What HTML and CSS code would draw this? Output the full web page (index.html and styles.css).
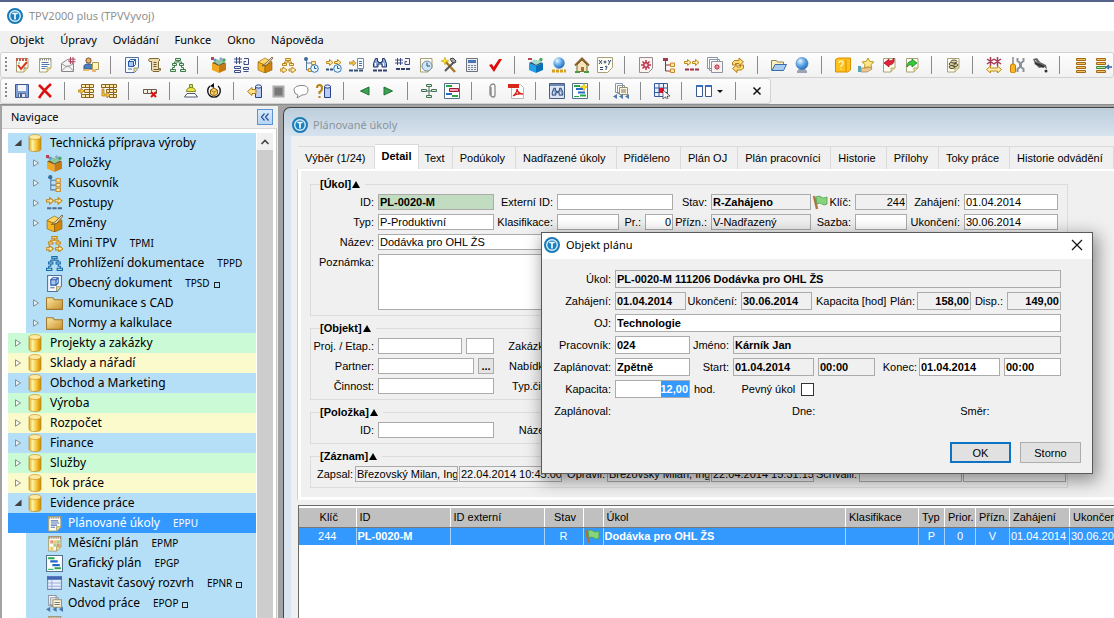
FILE: index.html
```html
<!DOCTYPE html>
<html lang="cs">
<head>
<meta charset="utf-8">
<title>TPV2000 plus (TPVVyvoj)</title>
<link rel="stylesheet" href="styles.css">
</head>
<body>
<svg class="sprite" aria-hidden="true">
  <defs>
    <linearGradient id="gold" x1="0" x2="1" y1="0" y2="0"><stop offset="0" stop-color="#e0a828"/><stop offset=".3" stop-color="#fff3a0"/><stop offset=".7" stop-color="#f0b820"/><stop offset="1" stop-color="#c88808"/></linearGradient>
    <linearGradient id="fold" x1="0" x2="1" y1="0" y2="1"><stop offset="0" stop-color="#ffe9a0"/><stop offset="1" stop-color="#c8902c"/></linearGradient>
    <radialGradient id="ball" cx=".35" cy=".3" r=".8"><stop offset="0" stop-color="#e8f6ff"/><stop offset=".5" stop-color="#5aa5e8"/><stop offset="1" stop-color="#2060b0"/></radialGradient>
  </defs>
  <symbol id="logo" viewBox="0 0 16 16"><circle cx="8" cy="8" r="7" fill="#d5eefb" stroke="#1a7ab5" stroke-width="2"/><circle cx="8" cy="8" r="4.6" fill="#1a80be"/><path d="M5.3 5.5h5.4M8 5.5v6" stroke="#fff" stroke-width="1.6"/></symbol>
  <symbol id="page" viewBox="0 0 16 16"><path d="M2.5 1.5h11.500v9.500l-4 4H2.500z" fill="#fffef2" stroke="#a8a078"/><path d="M10 15v-4h4" fill="#efe2a0" stroke="#b8a860"/></symbol>
  <symbol id="note" viewBox="0 0 16 16"><use href="#page"/><path d="M3 2.500h11" stroke="#8d8d8d" stroke-width="2" stroke-dasharray="1 1"/><path d="M4.500 5.500h7M4.500 7.500h8M4.500 9.500h6M4.500 11.500h4" stroke="#4f76b5"/></symbol>
  <symbol id="calcheck" viewBox="0 0 16 16"><use href="#page"/><path d="M2 2.500h12" stroke="#c75a4a" stroke-width="3" stroke-dasharray="2 1"/><path d="M4 8l3 4 6-7" fill="none" stroke="#d43a20" stroke-width="2"/><path d="M4 6h2M10 11h2" stroke="#6d8ec0"/></symbol>
  <symbol id="mail" viewBox="0 0 16 16"><path d="M1.500 6.500l6-4 6 4v8h-12z" fill="#f4f4f4" stroke="#888"/><path d="M1.500 14l5-5h2l5 5M2 7l5 3 6-3" fill="none" stroke="#999"/><path d="M10.500 0v7M13 0v7M8.500 2.200h7M8.500 4.700h7" stroke="#b0405a"/></symbol>
  <symbol id="person" viewBox="0 0 16 16"><circle cx="5.500" cy="3.500" r="2.600" fill="#e8b070" stroke="#7a4a20"/><path d="M1 12V8.500L3.500 7h4L10 8.500V12z" fill="#4d7ec0" stroke="#2e5590"/><path d="M9.500 5.500h6v7h-6z" fill="#fff6c0" stroke="#b09a50"/><path d="M0 12h6v2H0zM9 12h4v3H9z" fill="#e8b870"/></symbol>
  <symbol id="doc" viewBox="0 0 16 16"><path d="M1.500.5h13v10l-4 5h-9z" fill="#f4f8ff" stroke="#53709c"/><path d="M4.500 4.500h5v5h-5z" fill="#a9c6f0" stroke="#2457a5"/><path d="M4.500 4.500l2-2h5v5l-2 2M9.500 4.500l2-2" fill="none" stroke="#2457a5"/><path d="M4 12h4" stroke="#4b70a8"/><path d="M10 15v-4h4" fill="#f4e6a0" stroke="#a89858"/></symbol>
  <symbol id="scroll" viewBox="0 0 16 16"><path d="M2.500 1.500h9l1.500 1.500-1.500 1.500v7h2v1.500l-1.500 1.500H6l-1.500-1.500v-8.500h-2L1.500 3z" fill="#ecdcae" stroke="#7e6636"/><path d="M6.500 5.500h3M6.500 7.500h3M6.500 9.500h3M6.500 12.500h6" stroke="#6e5a34"/></symbol>
  <symbol id="treeshape" viewBox="0 0 16 16"><path d="M5.500 1.500h5v2h-5zM2.500 6.500h4v2h-4zM9.500 6.500h4v2h-4zM.5 12.500h5v2h-5zM10.500 12.500h5v2h-5z"/><path d="M8 3.500v1.500M4.500 6.500v-1.500h7v1.500M4.500 8.500v2h-2v2M11.500 8.500v2h2v2" fill="none"/></symbol>
  <symbol id="treegreen" viewBox="0 0 16 16"><use href="#treeshape" fill="#dff3d8" stroke="#3d7a4a"/></symbol>
  <symbol id="treegold" viewBox="0 0 16 16"><path d="M5.500 1.500h5v2h-5zM2.500 6.500h4v2h-4zM9.500 6.500h4v2h-4zM8 3.500v1.500M4.500 6.500v-1.500h7v1.500M0 12h3v-2l4 3-4 3v-2H0zM9 12h3v-2l4 3-4 3v-2H9z" fill="#fff0b0" stroke="#c08414"/></symbol>
  <symbol id="treeblue" viewBox="0 0 16 16"><use href="#treeshape" fill="#a0e0d8" stroke="#1766a8"/></symbol>
  <symbol id="box" viewBox="0 0 16 16"><path d="M1 6l7 3v7l-7-3z" fill="#f0a820"/><path d="M8 9l7-3v7l-7 3z" fill="#c87a10"/><path d="M1 6l6-3 8 3-7 3z" fill="#7a5210"/><path d="M3 5l3-3 3 2 3-2 2 3-6 3z" fill="#8cc8a0"/><circle cx="4" cy="3" r="1.500" fill="#5b9bd8"/><circle cx="13" cy="3" r="1.700" fill="#4da66a"/><path d="M0 0h3v3H0z" fill="#b84455"/><path d="M8 2l2-2 2 2-2 2z" fill="#88a8c8"/></symbol>
  <symbol id="bluebox" viewBox="0 0 16 16"><path d="M1 6l7 3v7l-7-3z" fill="#20a0e8"/><path d="M8 9l7-3v7l-7 3z" fill="#0870b8"/><path d="M1 6l6-3 8 3-7 3z" fill="#124e80"/><path d="M3 5l3-3 3 2 3-2 2 3-6 3z" fill="#a8dcc8"/><circle cx="13" cy="2.500" r="1.700" fill="#4da66a"/><path d="M0 1h4v2H0z" fill="#b84455"/></symbol>
  <symbol id="goldbox" viewBox="0 0 16 16"><path d="M1 5l7 3v8l-7-3z" fill="#f6b624" stroke="#8a5800" stroke-width=".6"/><path d="M8 8l7-3v8l-7 3z" fill="#cf850c" stroke="#8a5800" stroke-width=".6"/><path d="M1 5l7-4 7 4-7 3z" fill="#ffd968" stroke="#8a5800" stroke-width=".6"/><path d="M5 9l4-3 6-6 1 1-6 7z" fill="#e9d2a0" stroke="#5c4320" stroke-width=".7"/></symbol>
  <symbol id="hash" viewBox="0 0 16 16"><path d="M2.500 0v7M5.500 0v7M0 2h8M0 5h8M10 1.500h4.500v6H10M12 4.500h-2v3M.5 9.500h6v2h-6zM.5 13.500h6v2h-6zM9.500 10.500h5v2h-5zM9.500 14.500h5" fill="none" stroke="#3d4d86"/></symbol>
  <symbol id="hashdots" viewBox="0 0 16 16"><path d="M2.500 1v7M5.500 1v7M0 3h8M0 6h8M10 1.500h4.500v6H10M12 4.500h-2v3" fill="none" stroke="#3d4d86"/><path d="M1 12h14" stroke="#33406a" stroke-width="2" stroke-dasharray="4 1"/></symbol>
  <symbol id="clock" viewBox="0 0 16 16"><circle cx="11.500" cy="11.500" r="3.800" fill="#e7f6ff" stroke="#2d77b8"/><path d="M11.500 9v2.500h2" fill="none" stroke="#225a90"/></symbol>
  <symbol id="structure" viewBox="0 0 16 16"><path d="M4.500 3v11h5M4.500 5h5M4.500 9.500h5" fill="none" stroke="#56789c"/><circle cx="4" cy="2" r="2" fill="#3a6c9c"/><path d="M9.500 3.500h4v3h-4zM9.500 8h4v3h-4zM9.500 12.500h4v3h-4z" fill="#ffe9a8" stroke="#c8892a"/></symbol>
  <symbol id="treered" viewBox="0 0 16 16"><path d="M4.500 3v11h5M4.500 8h5" fill="none" stroke="#8a3348"/><path d="M2 1h5v3H2z" fill="#a03a50"/><path d="M9.500 6h4v3.500h-4zM9.500 12h4v3.500h-4z" fill="#ffe9a8" stroke="#c8892a"/></symbol>
  <symbol id="treeclock" viewBox="0 0 16 16"><path d="M3.500 3v10h4M4 6h5" fill="none" stroke="#56789c"/><circle cx="3" cy="2" r="2" fill="#3a6c9c"/><path d="M8.500 4.500h4v3h-4zM5.500 11.500h3v3h-3z" fill="#ffe9a8" stroke="#c8892a"/><use href="#clock"/></symbol>
  <symbol id="arr" viewBox="0 0 16 16"><path d="M.5 4.500h3v-2l3.500 3-3.500 3v-2h-3zM8.500 4.500h3v-2l3.500 3-3.500 3v-2h-3z" fill="#ffeeb0" stroke="#c08414"/></symbol>
  <symbol id="arrowsblue" viewBox="0 0 16 16"><use href="#arr"/><path d="M1 12.500h14" stroke="#4e6e96" stroke-width="2" stroke-dasharray="4 1"/></symbol>
  <symbol id="arrowsred" viewBox="0 0 16 16"><use href="#arr"/><path d="M1 12.500h14" stroke="#9c2f44" stroke-width="2" stroke-dasharray="4 1"/></symbol>
  <symbol id="arrowsclock" viewBox="0 0 16 16"><use href="#arr"/><path d="M0 12.500h8" stroke="#33507a" stroke-width="2" stroke-dasharray="3 1"/><use href="#clock"/></symbol>
  <symbol id="arrowdoc" viewBox="0 0 16 16"><path d="M0 5h4V3l3 3-3 3V7H0z" fill="#f3c040" stroke="#b07c10" stroke-width=".6"/><path d="M8.500 1.500h6v10h-6z" fill="#f8fbff" stroke="#7288a8"/><path d="M10 4.500h3M10 6.500h3M10 8.500h3" stroke="#4a72b0"/><path d="M0 13.500h15" stroke="#33507a" stroke-width="2" stroke-dasharray="4 1"/></symbol>
  <symbol id="binoc" viewBox="0 0 16 16"><path d="M3.500 1.500h2v3h1v1h3v-1h1v-3h2l2 5v3.500h-4.500V7h-4v3H1.500V6.500z" fill="#8fa8d8" stroke="#1f3568"/><path d="M3.500 6v3M11.500 6v3" stroke="#fff"/></symbol>
  <symbol id="binocdots" viewBox="0 0 16 16"><use href="#binoc"/><path d="M1 13.500h14" stroke="#33406a" stroke-width="2" stroke-dasharray="4 1"/></symbol>
  <symbol id="clockpage" viewBox="0 0 16 16"><use href="#page"/><circle cx="9" cy="9" r="5" fill="#cfe6f6" stroke="#6f8ea8"/><path d="M9 5.500V9h3" fill="none" stroke="#30506e"/></symbol>
  <symbol id="hammer" viewBox="0 0 16 16"><path d="M4 4l10 11" stroke="#a87824" stroke-width="2.400"/><path d="M14 4L4 14" stroke="#555" stroke-width="2"/><path d="M9 2l3-1 3 3-1 2-3-1z" fill="#aaa" stroke="#444"/><path d="M4 0l1 3 3 1-3 1-1 3-1-3-3-1 3-1z" fill="#ffe11a" stroke="#b89800" stroke-width=".5"/></symbol>
  <symbol id="calc" viewBox="0 0 16 16"><path d="M2.500 1.500h11v13h-11z" fill="#e9edf2" stroke="#6d7480"/><path d="M4 3h8v3H4z" fill="#4d72b8"/><path d="M4 8.500h8M4 10.500h8M4 12.500h8" stroke="#7c8694" stroke-dasharray="2 1"/></symbol>
  <symbol id="check" viewBox="0 0 16 16"><path d="M2 8l3-1 1.500 3L12 2h3L7 15z" fill="#e00c0c"/></symbol>
  <symbol id="globe" viewBox="0 0 16 16"><circle cx="8" cy="6" r="5.700" fill="url(#ball)"/><path d="M1 14h14" stroke="#d6a020" stroke-width="3" stroke-dasharray="3 1"/></symbol>
  <symbol id="globestand" viewBox="0 0 16 16"><path d="M3 14l3-3h4l3 3v2H3z" fill="#9aa4b4"/><circle cx="8" cy="6.500" r="6" fill="url(#ball)" stroke="#3a78b8" stroke-width=".6"/></symbol>
  <symbol id="house" viewBox="0 0 16 16"><path d="M3 8l5-5 5 5v6.500H3z" fill="#f6e4b8" stroke="#7a6238"/><path d="M1 8.500l7-7 7 7" fill="none" stroke="#8a6430" stroke-width="2"/><path d="M7 10h3v5H7z" fill="#a0703a"/><path d="M1 15h5M10 15h5" stroke="#4a9a40" stroke-width="2"/></symbol>
  <symbol id="xy" viewBox="0 0 16 16"><path d="M.5.5h15v10l-5 5H.500z" fill="#fffef2" stroke="#a8a078"/><path d="M2 3l3 4M5 3L2 7M6.500 5h3M8 3.500v3M11 3l1.500 2L14 3M12.500 5l-1 3M3 10.500h3M3 12.500h3M8 10q2-2 2 0l-1 2v1" fill="none" stroke="#2c4570"/></symbol>
  <symbol id="gear" viewBox="0 0 16 16"><path d="M8 3v10M3 8h10M4.500 4.500l7 7M11.500 4.500l-7 7" stroke="#c03a55" stroke-width="1.600"/><circle cx="8" cy="8" r="2.200" fill="#f4d4dc" stroke="#c03a55" stroke-width="1.400"/></symbol>
  <symbol id="gearpage" viewBox="0 0 16 16"><path d="M1.500.5h13v11l-4 4h-9z" fill="#fbf3ee" stroke="#9a8a94"/><use href="#gear"/></symbol>
  <symbol id="gearpages" viewBox="0 0 16 16"><path d="M.5.5h10v11H.5zM2.500 2.500h10v11h-10z" fill="#fff" stroke="#8a94a4"/><path d="M4.500 4.500h11v11h-11z" fill="#fbf3ee" stroke="#8a94a4"/><use href="#gear" x="5" y="5" width="10" height="10"/></symbol>
  <symbol id="refresh" viewBox="0 0 16 16"><path d="M2.500 8V5.500l2-2H9V1l4.500 4L9 9V6.500H5.500V8z" fill="#fbdc78" stroke="#b87c10"/><path d="M13.500 8v3l-2 2H7v2.500L2.500 11.500 7 7.500V10h3.500V8z" fill="#fbdc78" stroke="#b87c10"/></symbol>
  <symbol id="openfolder" viewBox="0 0 16 16"><path d="M.5 13.500v-10h5l1 1.500h6v3" fill="#fff0b8" stroke="#8a8060"/><path d="M1 13.500L4 7.500h11.500l-3 6z" fill="#a9cbf0" stroke="#3a6ca8"/></symbol>
  <symbol id="goldq" viewBox="0 0 16 16"><path d="M.5 2.500l3-1.500h12v12l-3 2H.500z" fill="#ffc21c" stroke="#d88c00"/><path d="M11 3v12" stroke="#d88c00"/><path d="M4 6q0-2 2-2t2 2-2 3v1M6 11.500v1" fill="none" stroke="#fff3b0" stroke-width="1.400"/></symbol>
  <symbol id="starhand" viewBox="0 0 16 16"><path d="M10 1l1.700 3.300L16 5l-3 2.500.7 4-3.700-2-3.700 2 .7-4L4 5l4.300-.7z" fill="#fbe88a" stroke="#c09a20"/><path d="M3 11h6l4-1 1 2-5 3H3z" fill="#f0c890" stroke="#a87c4c" stroke-width=".7"/><path d="M0 9h3v6H0z" fill="#56a4b8"/></symbol>
  <symbol id="redarrow" viewBox="0 0 16 16"><use href="#page"/><path d="M3 6l5-4v2q4 0 5-3 1 7-5 7v2z" fill="#e8203c" stroke="#900c20" stroke-width=".7"/></symbol>
  <symbol id="greenarrow" viewBox="0 0 16 16"><use href="#page"/><path d="M13 6L8 2v2Q3 4 3 10q2-3 5-2v2z" fill="#38c838" stroke="#0c7818" stroke-width=".7"/></symbol>
  <symbol id="coins" viewBox="0 0 16 16"><use href="#page"/><g fill="#e5d9a0" stroke="#4e4a36"><ellipse cx="7" cy="10" rx="3" ry="1.500"/><ellipse cx="10" cy="8" rx="3" ry="1.500"/><ellipse cx="7" cy="7" rx="3" ry="1.500"/><ellipse cx="9" cy="4.500" rx="3" ry="1.500"/></g></symbol>
  <symbol id="gearsarrow" viewBox="0 0 16 16"><path d="M4.500 0v9M1 2l7 5M8 2L1 7M11.500 0v9M8 2l7 5M15 2L8 7" stroke="#a83a54" stroke-width="1.500"/><path d="M.5 12.500l4-3.500v2h7V9l4 3.500-4 3.500v-2h-7v2z" fill="#fff0b0" stroke="#c08414"/></symbol>
  <symbol id="tools" viewBox="0 0 16 16"><path d="M4 0v8" stroke="#888" stroke-width="1.500"/><rect x="1.500" y="7" width="5" height="9" rx="2" fill="#ffb420" stroke="#c07c00"/><path d="M8.500 1v3l2.500 2v4l-2.500 2v3M14.500 1v3L12 6v4l2.500 2v3" fill="none" stroke="#8a929c" stroke-width="2"/></symbol>
  <symbol id="oil" viewBox="0 0 16 16"><path d="M1 2l4-1 3 4 6 3 1 4-3-2-5 1-4-4z" fill="#666"/><path d="M3 3l4 5" stroke="#ccc"/><path d="M3 6l9 4" stroke="#333" stroke-width="2"/><circle cx="14" cy="14" r="1.500" fill="#333"/></symbol>
  <symbol id="stack" viewBox="0 0 16 16"><path d="M3.500 1.500h9v2h-9zM3.500 5.500h9v2h-9zM3.500 9.500h9v2h-9zM3.500 13.500h9v2h-9z" fill="#f8c060" stroke="#a06a18"/></symbol>
  <symbol id="stackarrow" viewBox="0 0 16 16"><path d="M.5 1.500h9v2h-9zM.5 13.500h9v2h-9zM.5 5.500h9v2h-9z" fill="#f8c060" stroke="#a06a18"/><path d="M.5 9.500h9v2h-9z" fill="#c0e0a0" stroke="#3f8a3a"/><path d="M16 10h-4M13 8l-2.500 2 2.500 2" fill="none" stroke="#2c62a8" stroke-width="1.500"/></symbol>
  <symbol id="save" viewBox="0 0 16 16"><path d="M1.500 1.500h13v13h-13z" fill="#7d9fd6" stroke="#3c5690"/><path d="M4 2h8v6H4z" fill="#f2f5fb"/><path d="M4.500 10.500h7v4h-7z" fill="#dfe6f2" stroke="#5a6c94"/><path d="M6 11h2v3H6z" fill="#3c5690"/></symbol>
  <symbol id="cross" viewBox="0 0 16 16"><path d="M2 2q4 4 12 12M14 1Q8 6 2 15" fill="none" stroke="#dd1010" stroke-width="2.600"/></symbol>
  <symbol id="insrow" viewBox="0 0 16 16"><path d="M3.500 1.500h12v3h-12zM6.500 6.500h9v3h-9zM3.500 11.500h12v3h-12zM7.500 1.500v3M11.500 1.500v13M7.500 11.500v3" fill="#ffe9a8" stroke="#8a6420"/><path d="M0 7h3V5l3 3-3 3V9H0z" fill="#f6c23c" stroke="#a87410" stroke-width=".7"/></symbol>
  <symbol id="insrow2" viewBox="0 0 16 16"><path d="M.5 1.500h15v3H.5zM5.500 6.500h10v3h-10zM8.500 11.500h7v3h-7zM4.500 1.500v3M8.500 1.500v8M12.500 1.500v13" fill="#ffe9a8" stroke="#8a6420"/><path d="M1 6h2v5h3V9l3 3-3 3v-2H1z" fill="#f6c23c" stroke="#a87410" stroke-width=".7"/></symbol>
  <symbol id="delrow" viewBox="0 0 16 16"><path d="M1.500 6.500h13v4h-13zM5.500 6.500v4M9.500 6.500v4" fill="#f4f0e4" stroke="#6a5c48"/><path d="M9 9l5 5M14 9l-5 5" stroke="#dd1010" stroke-width="2"/></symbol>
  <symbol id="bell" viewBox="0 0 16 16"><path d="M6.500 1.500h3v3h-3z" fill="#c8e46a" stroke="#7d8a20"/><path d="M3.500 8.500q0-4 4.500-4t4.500 4z" fill="#f2e24c" stroke="#7d8a20"/><path d="M4 10.500h8l2.500 3.500h-13z" fill="#fff" stroke="#4c5a68"/></symbol>
  <symbol id="cycle" viewBox="0 0 16 16"><path d="M4 3A6.300 6.300 0 1 0 12 3" fill="none" stroke="#111" stroke-width="1.400"/><path d="M8 0l-4 3 4 2z" fill="#111"/><path d="M4.500 7L8 5l3.500 2v4L8 13l-3.500-2z" fill="#f9d36c" stroke="#8a5c08"/><path d="M5 7.500l3 1.500 3-1.500M8 9v4" fill="none" stroke="#b07c20"/></symbol>
  <symbol id="dbin" viewBox="0 0 16 16"><path d="M8.500 3.500h6v11h-6z" fill="#b9cdf2" stroke="#27408a"/><ellipse cx="11.500" cy="3.500" rx="3" ry="1.600" fill="#e4ecfb" stroke="#27408a"/><path d="M9 6.500H5v-2l-4.500 4 4.500 4v-2h4z" fill="#ffe28a" stroke="#b07c10"/></symbol>
  <symbol id="dbq" viewBox="0 0 16 16"><path d="M8.500 3.500h6v11h-6z" fill="#b9cdf2" stroke="#27408a"/><ellipse cx="11.500" cy="3.500" rx="3" ry="1.600" fill="#e4ecfb" stroke="#27408a"/><path d="M1 5q0-3 2.500-3T6 5 3.500 9v2M3.500 13v2" fill="none" stroke="#b8820c" stroke-width="2"/></symbol>
  <symbol id="stop" viewBox="0 0 16 16"><path d="M3.500 3.500h10v10h-10z" fill="#777" stroke="#aaa" stroke-width="2"/></symbol>
  <symbol id="bubble" viewBox="0 0 16 16"><path d="M5 12Q1 11 1 7t7-4.500T15 7t-6 5l-5 3z" fill="#fff" stroke="#888"/></symbol>
  <symbol id="prev" viewBox="0 0 16 16"><path d="M12 4v8L3.500 8z" fill="#3da052" stroke="#1f7434"/></symbol>
  <symbol id="next" viewBox="0 0 16 16"><path d="M4 4v8l8.500-4z" fill="#3da052" stroke="#1f7434"/></symbol>
  <symbol id="flow" viewBox="0 0 16 16"><path d="M8 3v10M3 8h10" stroke="#46705a"/><path d="M5.500 1.500h5v2h-5zM.5 6.500h5v2h-5zM10.500 6.500h5v2h-5zM5.500 12.500h5v2h-5z" fill="#dff3d8" stroke="#46705a"/></symbol>
  <symbol id="gantt" viewBox="0 0 16 16"><path d="M.5.5h15v15H.5z" fill="#fff" stroke="#54708c"/><path d="M2 3h6M8 12.500h6" stroke="#25a845" stroke-width="2"/><path d="M4 6h7M6 9.500h7" stroke="#2468c8" stroke-width="2"/><path d="M2 13.500h5" stroke="#25a845"/></symbol>
  <symbol id="ganttred" viewBox="0 0 16 16"><path d="M.5.5h15v15H.5z" fill="#fff" stroke="#54708c"/><path d="M2 3h6M8 13h6" stroke="#25a845" stroke-width="2"/><path d="M5.500 5.500h9v3h-9z" fill="#f4a0b0" stroke="#a01838"/><path d="M2 11h6" stroke="#2468c8" stroke-width="2"/></symbol>
  <symbol id="ganttstar" viewBox="0 0 16 16"><use href="#gantt"/><path d="M12 0l1 3 3 1-3 1-1 3-1-3-3-1 3-1z" fill="#ffe11a" stroke="#b89800" stroke-width=".5"/></symbol>
  <symbol id="clip" viewBox="0 0 16 16"><path d="M6 4v8q0 2 2 2t2-2V3.500Q10 1 8 1T5 3.500v9" fill="none" stroke="#8a8a8a" stroke-width="1.300"/></symbol>
  <symbol id="pdf" viewBox="0 0 16 16"><path d="M3.500 1.500h9l3 3v11h-12z" fill="#fff" stroke="#b8b8b8"/><path d="M0 1h11v4H0z" fill="#d8281c"/><path d="M5 13q4-3 4-7 1 5 6 5-6-1-10 2z" fill="none" stroke="#d8281c" stroke-width="1.300"/></symbol>
  <symbol id="find" viewBox="0 0 16 16"><path d="M.5.5h15v15H.5z" fill="#dbe6f6" stroke="#4a5c7c"/><path d="M1 2h14" stroke="#6d87b4" stroke-width="2"/><use href="#binoc" x="2" y="4" width="13" height="13"/></symbol>
  <symbol id="docs" viewBox="0 0 16 16"><path d="M2.500.5h7v9h-7zM4.500 2.500h7v8h-7z" fill="#fff" stroke="#8a94a4"/><path d="M6.500 4.500h8v7h-8z" fill="#fbf6dc" stroke="#9a9068"/><path d="M8 7h5M8 9h5" stroke="#777"/><path d="M4 11v5l-4-2.500zM10 11v5l-4-2.500zM16 11v5l-4-2.500z" fill="#4e78ae"/></symbol>
  <symbol id="grid" viewBox="0 0 16 16"><path d="M.5.5h13v13H.5zM5 .5v13M9.500.5v13M.5 5h13M.5 9.500h13" fill="#e8f0fc" stroke="#3458a0"/><path d="M5 5h5v5H5z" fill="#e81020"/><path d="M9 7l7 6-3 .3 1 2.500-1.500.5-1-2.500L9 16z" fill="#fff" stroke="#333" stroke-width=".7"/></symbol>
  <symbol id="cols" viewBox="0 0 16 16"><path d="M.5 2.500h6v11h-6zM9.500 2.500h6v11h-6z" fill="#fff" stroke="#3a5a90"/><path d="M0 3h7M9 3h7" stroke="#3a6cc0" stroke-width="2"/></symbol>
  <symbol id="x" viewBox="0 0 16 16"><path d="M4.500 4.500l7 7M11.500 4.500l-7 7" stroke="#111" stroke-width="1.500"/></symbol>
  <symbol id="db" viewBox="0 0 14 18"><path d="M1 3v12q0 2.500 6 2.500t6-2.500V3z" fill="url(#gold)" stroke="#bd8a20" stroke-width=".7"/><ellipse cx="7" cy="3" rx="6" ry="2.500" fill="#ffeaa0" stroke="#c9982c" stroke-width=".7"/></symbol>
  <symbol id="folder" viewBox="0 0 16 16"><path d="M.5 2.500h6l1.500 2h7.500v9H.500z" fill="url(#fold)" stroke="#a07a30"/></symbol>
  <symbol id="calendar" viewBox="0 0 16 16"><use href="#page"/><path d="M3 2.500h11" stroke="#9a7a60" stroke-width="2" stroke-dasharray="1 1"/><path d="M4 5h3v3H4zM10 8h3v3h-3z" fill="#e8907c"/><path d="M7 5h3v3H7zM4 11h3v3H4z" fill="#f4c86c"/><path d="M10 5h3v3h-3zM7 8h3v3H7z" fill="#a9cf8c"/></symbol>
  <symbol id="table" viewBox="0 0 16 16"><path d="M1.500 1.500h13v12h-13z" fill="#e6eefb" stroke="#6f86bb"/><path d="M1 3h14" stroke="#4168b8" stroke-width="3"/><path d="M2 7.500h12M2 10.500h12M5.500 5v8" stroke="#9db1d8"/></symbol>
  <symbol id="flag" viewBox="0 0 16 16"><path d="M2 2l3 13" stroke="#a9753a" stroke-width="2.400"/><path d="M4 3q3-2 5 0t6 0v7q-3 2-5 0T5 10z" fill="#86d47c" stroke="#4d9c50" stroke-width=".8"/></symbol>
  <symbol id="closed" viewBox="0 0 8 8"><path d="M1.500.8v6.400L6.500 4z" fill="#fff" fill-opacity=".6" stroke="#8c8c8c"/></symbol>
  <symbol id="open" viewBox="0 0 8 8"><path d="M7.500.5v6.500h-7z" fill="#404040"/></symbol>
</svg>

<div class="app">
  <header class="titlebar"><svg class="logo"><use href="#logo"/></svg><span>TPV2000 plus (TPVVyvoj)</span></header>
  <nav class="menubar">
    <button>Objekt</button><button>Úpravy</button><button>Ovládání</button><button>Funkce</button><button>Okno</button><button>Nápověda</button>
  </nav>
  <div class="toolbar" role="toolbar" aria-label="Moduly">
    <i class="grip"></i>
    <button aria-label="Kalendář"><svg><use href="#calcheck"/></svg></button><button aria-label="Poznámky"><svg><use href="#note"/></svg></button><button aria-label="Pošta"><svg><use href="#mail"/></svg></button><button aria-label="Uživatel"><svg><use href="#person"/></svg></button>
    <i class="sep"></i>
    <button aria-label="Dokument"><svg><use href="#doc"/></svg></button><button aria-label="Předpis"><svg><use href="#scroll"/></svg></button><button aria-label="Struktura"><svg><use href="#treegreen"/></svg></button>
    <i class="sep"></i>
    <button aria-label="Položky"><svg><use href="#box"/></svg></button><button aria-label="Číselník"><svg><use href="#hash"/></svg></button><button aria-label="Změny"><svg><use href="#goldbox"/></svg></button><button aria-label="Mini TPV"><svg><use href="#treegold"/></svg></button><button aria-label="Kusovník"><svg><use href="#treeclock"/></svg></button><button aria-label="Postup v čase"><svg><use href="#arrowsclock"/></svg></button><button aria-label="Postup"><svg><use href="#arrowdoc"/></svg></button><button aria-label="Hledat"><svg><use href="#binocdots"/></svg></button><button aria-label="Operace"><svg><use href="#hashdots"/></svg></button><button aria-label="Historie"><svg><use href="#clockpage"/></svg></button><button aria-label="Nástroje"><svg><use href="#hammer"/></svg></button><button aria-label="Kalkulace"><svg><use href="#calc"/></svg></button><button aria-label="Schválit"><svg><use href="#check"/></svg></button>
    <i class="sep"></i>
    <button aria-label="Sklad"><svg><use href="#bluebox"/></svg></button><button aria-label="Síť"><svg><use href="#globe"/></svg></button><button aria-label="Domů"><svg><use href="#house"/></svg></button><button aria-label="Vzorce"><svg><use href="#xy"/></svg></button>
    <i class="sep"></i>
    <button aria-label="Zakázka"><svg><use href="#gearpage"/></svg></button><button aria-label="Strom zakázky"><svg><use href="#treered"/></svg></button><button aria-label="Postup zakázky"><svg><use href="#arrowsred"/></svg></button><button aria-label="Zakázky"><svg><use href="#gearpages"/></svg></button><button aria-label="Obnovit"><svg><use href="#refresh"/></svg></button>
    <i class="sep"></i>
    <button aria-label="Otevřít"><svg><use href="#openfolder"/></svg></button><button aria-label="Web"><svg><use href="#globestand"/></svg></button>
    <i class="sep"></i>
    <button aria-label="Poptávka"><svg><use href="#goldq"/></svg></button><button aria-label="Nabídka"><svg><use href="#starhand"/></svg></button><button aria-label="Příjem"><svg><use href="#redarrow"/></svg></button><button aria-label="Výdej"><svg><use href="#greenarrow"/></svg></button>
    <i class="sep"></i>
    <button aria-label="Finance"><svg><use href="#coins"/></svg></button>
    <i class="sep"></i>
    <button aria-label="Výroba"><svg><use href="#gearsarrow"/></svg></button><button aria-label="Nářadí"><svg><use href="#tools"/></svg></button><button aria-label="Údržba"><svg><use href="#oil"/></svg></button>
    <i class="sep"></i>
    <button aria-label="Řádky"><svg><use href="#stack"/></svg></button><button aria-label="Vložit řádek"><svg><use href="#stackarrow"/></svg></button>
  </div>
  <div class="toolbar short" role="toolbar" aria-label="Záznam">
    <i class="grip"></i>
    <button aria-label="Uložit"><svg><use href="#save"/></svg></button><button aria-label="Smazat"><svg><use href="#cross"/></svg></button>
    <i class="sep"></i>
    <button aria-label="Vložit"><svg><use href="#insrow"/></svg></button><button aria-label="Vložit pod"><svg><use href="#insrow2"/></svg></button>
    <i class="sep"></i>
    <button aria-label="Odebrat"><svg><use href="#delrow"/></svg></button>
    <i class="sep"></i>
    <button aria-label="Upozornění"><svg><use href="#bell"/></svg></button><button aria-label="Cyklus"><svg><use href="#cycle"/></svg></button>
    <i class="sep"></i>
    <button aria-label="Načíst"><svg><use href="#dbin"/></svg></button><button aria-label="Zastavit"><svg><use href="#stop"/></svg></button><button aria-label="Komentář"><svg><use href="#bubble"/></svg></button><button aria-label="Dotaz"><svg><use href="#dbq"/></svg></button>
    <i class="sep"></i>
    <button aria-label="Předchozí"><svg><use href="#prev"/></svg></button><button aria-label="Další"><svg><use href="#next"/></svg></button>
    <i class="sep"></i>
    <button aria-label="Vazby"><svg><use href="#flow"/></svg></button><button aria-label="Plán"><svg><use href="#ganttred"/></svg></button>
    <i class="sep"></i>
    <button aria-label="Příloha"><svg><use href="#clip"/></svg></button><button aria-label="PDF"><svg><use href="#pdf"/></svg></button>
    <i class="sep"></i>
    <button aria-label="Najít"><svg><use href="#find"/></svg></button><button aria-label="Nový plán"><svg><use href="#ganttstar"/></svg></button>
    <i class="sep"></i>
    <button aria-label="Odvod"><svg><use href="#docs"/></svg></button>
    <i class="sep"></i>
    <button aria-label="Mřížka"><svg><use href="#grid"/></svg></button>
    <i class="sep"></i>
    <button class="drop" aria-label="Sloupce"><svg><use href="#cols"/></svg><i class="caret"></i></button>
    <i class="sep"></i>
    <button aria-label="Zavřít"><svg><use href="#x"/></svg></button>
  </div>

  <div class="main">
    <aside class="nav">
      <div class="nav-head"><span>Navigace</span><button class="collapse" aria-label="Skrýt"><svg viewBox="0 0 10 10"><path d="M4.500 1.500L1.500 5l3 3.500M8.500 1.500L5.500 5l3 3.500" fill="none" stroke="#27509c" stroke-width="1.200"/></svg></button></div>
      <div class="nav-body">
        <ul class="tree">
          <li class="blue"><svg class="tw"><use href="#open"/></svg><svg class="db"><use href="#db"/></svg>Technická příprava výroby</li>
          <li class="sub"><svg class="tw"><use href="#closed"/></svg><svg class="ic"><use href="#box"/></svg>Položky</li>
          <li class="sub"><svg class="tw"><use href="#closed"/></svg><svg class="ic"><use href="#structure"/></svg>Kusovník</li>
          <li class="sub"><svg class="tw"><use href="#closed"/></svg><svg class="ic"><use href="#arrowsblue"/></svg>Postupy</li>
          <li class="sub"><svg class="tw"><use href="#closed"/></svg><svg class="ic"><use href="#goldbox"/></svg>Změny</li>
          <li class="sub"><i class="tw"></i><svg class="ic"><use href="#treegold"/></svg>Mini TPV<small>TPMI</small></li>
          <li class="sub"><i class="tw"></i><svg class="ic"><use href="#treeblue"/></svg>Prohlížení dokumentace<small>TPPD</small></li>
          <li class="sub"><i class="tw"></i><svg class="ic"><use href="#doc"/></svg>Obecný dokument<small>TPSD</small><i class="sq"></i></li>
          <li class="sub"><svg class="tw"><use href="#closed"/></svg><svg class="ic"><use href="#folder"/></svg>Komunikace s CAD</li>
          <li class="sub"><svg class="tw"><use href="#closed"/></svg><svg class="ic"><use href="#folder"/></svg>Normy a kalkulace</li>
          <li class="green"><svg class="tw"><use href="#closed"/></svg><svg class="db"><use href="#db"/></svg>Projekty a zakázky</li>
          <li class="yellow"><svg class="tw"><use href="#closed"/></svg><svg class="db"><use href="#db"/></svg>Sklady a nářadí</li>
          <li class="blue"><svg class="tw"><use href="#closed"/></svg><svg class="db"><use href="#db"/></svg>Obchod a Marketing</li>
          <li class="green"><svg class="tw"><use href="#closed"/></svg><svg class="db"><use href="#db"/></svg>Výroba</li>
          <li class="yellow"><svg class="tw"><use href="#closed"/></svg><svg class="db"><use href="#db"/></svg>Rozpočet</li>
          <li class="blue"><svg class="tw"><use href="#closed"/></svg><svg class="db"><use href="#db"/></svg>Finance</li>
          <li class="green"><svg class="tw"><use href="#closed"/></svg><svg class="db"><use href="#db"/></svg>Služby</li>
          <li class="yellow"><svg class="tw"><use href="#closed"/></svg><svg class="db"><use href="#db"/></svg>Tok práce</li>
          <li class="blue"><svg class="tw"><use href="#open"/></svg><svg class="db"><use href="#db"/></svg>Evidence práce</li>
          <li class="sub selected"><i class="tw"></i><svg class="ic"><use href="#note"/></svg>Plánované úkoly<small>EPPU</small></li>
          <li class="sub"><i class="tw"></i><svg class="ic"><use href="#calendar"/></svg>Měsíční plán<small>EPMP</small></li>
          <li class="sub"><i class="tw"></i><svg class="ic"><use href="#gantt"/></svg>Grafický plán<small>EPGP</small></li>
          <li class="sub"><i class="tw"></i><svg class="ic"><use href="#table"/></svg>Nastavit časový rozvrh<small>EPNR</small><i class="sq"></i></li>
          <li class="sub"><i class="tw"></i><svg class="ic"><use href="#docs"/></svg>Odvod práce<small>EPOP</small><i class="sq"></i></li>
          <li class="sub"><i class="tw"></i><svg class="ic"><use href="#note"/></svg></li>
        </ul>
        <div class="scroll"><button aria-label="Nahoru"><svg viewBox="0 0 10 10"><path d="M1.500 7L5 3.500 8.500 7" fill="none" stroke="#444" stroke-width="1.600"/></svg></button></div>
      </div>
    </aside>

    <div class="workspace">
      <section class="window">
        <h1 class="win-title"><svg class="logo"><use href="#logo"/></svg>Plánované úkoly</h1>
        <div class="win-body">
          <div class="tabs" role="tablist">
            <button role="tab">Výběr (1/24)</button><button role="tab" class="active" aria-selected="true">Detail</button><button role="tab">Text</button><button role="tab">Podúkoly</button><button role="tab">Nadřazené úkoly</button><button role="tab">Přiděleno</button><button role="tab">Plán OJ</button><button role="tab">Plán pracovníci</button><button role="tab">Historie</button><button role="tab">Přílohy</button><button role="tab">Toky práce</button><button role="tab" class="last">Historie odvádění</button>
          </div>
          <div class="tabpage">
            <fieldset>
              <legend>[Úkol]<b class="up"></b></legend>
              <div class="grid">
                <label for="id">ID:</label><input id="id" class="key" value="PL-0020-M">
                <label for="ext">Externí ID:</label><input id="ext">
                <label for="stav">Stav:</label><input id="stav" class="ro bold" readonly value="R-Zahájeno">
                <label for="klic"><svg class="flag"><use href="#flag"/></svg>Klíč:</label><input id="klic" class="ro num" readonly value="244">
                <label for="zah">Zahájení:</label><input id="zah" value="01.04.2014">
                <label for="typ">Typ:</label><input id="typ" value="P-Produktivní">
                <label for="klas">Klasifikace:</label>
                <div class="pair"><input id="klas" class="grow"><label for="pr">Pr.:</label><input id="pr" class="num w28" value="0"></div>
                <label for="prizn">Přízn.:</label><input id="prizn" class="ro" readonly value="V-Nadřazený">
                <label for="sazba">Sazba:</label><input id="sazba">
                <label for="uk">Ukončení:</label><input id="uk" value="30.06.2014">
                <label for="nazev">Název:</label><input id="nazev" class="wide" value="Dodávka pro OHL ŽS">
                <label for="pozn">Poznámka:</label><textarea id="pozn" class="wide"></textarea>
              </div>
            </fieldset>
            <fieldset>
              <legend>[Objekt]<b class="up"></b></legend>
              <div class="grid">
                <label for="proj">Proj. / Etap.:</label><div class="pair gap"><input id="proj" class="grow"><input class="w28" aria-label="Etapa"></div>
                <label for="zak">Zakázka:</label><input id="zak" class="wide2">
                <label for="partner">Partner:</label><div class="pair gap"><input id="partner" class="grow"><button class="dots">...</button></div>
                <label for="nab">Nabídka:</label><input id="nab" class="wide2">
                <label for="cin">Činnost:</label><input id="cin">
                <label for="tcin">Typ.čin.:</label><input id="tcin" class="wide2">
              </div>
            </fieldset>
            <fieldset>
              <legend>[Položka]<b class="up"></b></legend>
              <div class="grid">
                <label for="pid">ID:</label><input id="pid"><label for="pn">Název:</label><input id="pn" class="wide2">
              </div>
            </fieldset>
            <fieldset>
              <legend>[Záznam]<b class="up"></b></legend>
              <div class="stamp">
                <label for="zap">Zapsal:</label><input id="zap" class="ro" readonly value="Březovský Milan, Ing"><input class="ro" readonly aria-label="Zapsáno" value="22.04.2014 10:45:00">
                <label for="opr">Opravil:</label><input id="opr" class="ro" readonly value="Březovský Milan, Ing"><input class="ro" readonly aria-label="Opraveno" value="22.04.2014 15:31:15">
                <label for="sch">Schválil:</label><input id="sch" class="ro" readonly><input class="ro" readonly aria-label="Schváleno">
              </div>
            </fieldset>
          </div>
          <div class="list">
            <table>
              <colgroup><col class="c1"><col class="c2"><col class="c2"><col class="c3"><col class="c4"><col><col class="c5"><col class="c6"><col class="c7"><col class="c8"><col class="c9"><col class="c9"></colgroup>
              <thead><tr><th class="ctr">Klíč</th><th>ID</th><th>ID externí</th><th class="ctr">Stav</th><th></th><th>Úkol</th><th>Klasifikace</th><th>Typ</th><th>Prior.</th><th>Přízn.</th><th>Zahájení</th><th>Ukončení</th></tr></thead>
              <tbody><tr><td class="ctr">244</td><td class="bold">PL-0020-M</td><td></td><td class="ctr">R</td><td class="fl"><svg class="flag"><use href="#flag"/></svg></td><td class="bold">Dodávka pro OHL ŽS</td><td></td><td class="ctr">P</td><td class="ctr">0</td><td class="ctr">V</td><td>01.04.2014</td><td>30.06.2014</td></tr></tbody>
            </table>
          </div>
        </div>
      </section>
    </div>
  </div>

  <dialog open class="dialog" aria-labelledby="dt">
    <h2 class="dlg-title"><svg class="logo"><use href="#logo"/></svg><span id="dt">Objekt plánu</span><button class="close" aria-label="Zavřít"><svg viewBox="0 0 12 12"><path d="M1 1l10 10M11 1L1 11" stroke="#111" stroke-width="1.200"/></svg></button></h2>
    <form class="dlg-body">
      <div class="line"><label class="first" for="d1">Úkol:</label><input id="d1" class="ro grow" readonly value="PL-0020-M 111206 Dodávka pro OHL ŽS"></div>
      <div class="line"><label class="first" for="d2">Zahájení:</label><input id="d2" class="ro w71" readonly value="01.04.2014"><label class="l55" for="d3">Ukončení:</label><input id="d3" class="ro w71" readonly value="30.06.2014"><span class="cap">Kapacita [hod]</span><label class="grow" for="d4">Plán:</label><input id="d4" class="ro num w54" readonly value="158,00"><label class="l36" for="d5">Disp.:</label><input id="d5" class="ro num w54" readonly value="149,00"></div>
      <div class="line"><label class="first" for="d6">OJ:</label><input id="d6" class="grow" value="Technologie"></div>
      <div class="line"><label class="first" for="d7">Pracovník:</label><input id="d7" class="w75" value="024"><label class="l43" for="d8">Jméno:</label><input id="d8" class="ro grow" readonly value="Kárník Jan"></div>
      <div class="line"><label class="first" for="d9">Zaplánovat:</label><input id="d9" class="w75" value="Zpětně"><label class="l43" for="d10">Start:</label><input id="d10" class="ro w81" readonly value="01.04.2014"><input class="ro w57 ml" readonly aria-label="Start čas" value="00:00"><label class="grow" for="d11">Konec:</label><input id="d11" class="w81" value="01.04.2014"><input class="w57 ml" aria-label="Konec čas" value="00:00"></div>
      <div class="line"><label class="first" for="d12">Kapacita:</label><input id="d12" class="w75 num picked" value="12,00"><span class="cap">hod.</span><label class="fixed" for="d13">Pevný úkol</label><input id="d13" type="checkbox"></div>
      <div class="line info"><span class="first">Zaplánoval:</span><span class="dne">Dne:</span><span class="smer">Směr:</span></div>
      <div class="actions"><button type="button" class="ok">OK</button><button type="button">Storno</button></div>
    </form>
  </dialog>
</div>
</body>
</html>
```
FILE: styles.css
```css
* { box-sizing: border-box; }
body { margin: 0; overflow: hidden; background: #f0f0f0; color: #000; font: 11px/14px "Liberation Sans", Arial, sans-serif; }
button, input, textarea { font: inherit; color: inherit; margin: 0; }
button { border: 0; padding: 0; background: none; }
svg { display: block; flex: none; }
.sprite { position: absolute; width: 0; height: 0; }
.app { position: relative; display: flex; flex-direction: column; height: 100vh; overflow: hidden; }
.logo { width: 16px; height: 16px; }
.bold { font-weight: bold; }
.grow { flex: 1; min-width: 0; }

.titlebar { display: flex; align-items: center; gap: 6px; height: 31px; flex: none; padding: 0 7px 2px; background: #fff; border-top: 2px solid #55628c; font: 11px/16px "Noto Sans", sans-serif; color: #8f8f8f; }
.menubar { display: flex; align-items: center; gap: 16px; height: 21px; flex: none; padding: 0 10px 3px; font: 11px/16px "Noto Sans", sans-serif; }

.toolbar { display: flex; align-items: center; height: 26px; flex: none; padding-left: 4px; background: linear-gradient(#fdfdfd, #f1f1f1); border: 1px solid #d2d2d2; border-radius: 3px; overflow: hidden; }
.toolbar.short { align-self: flex-start; padding-right: 2px; }
.toolbar button { width: 23px; height: 22px; flex: none; display: flex; align-items: center; justify-content: center; }
.toolbar svg { width: 16px; height: 16px; }
.toolbar .drop { width: 36px; gap: 5px; }
.caret { border: 3px solid transparent; border-top-color: #111; border-bottom: 0; }
.grip { width: 2px; height: 16px; flex: none; margin-right: 3px; background: repeating-linear-gradient(#8a8a8a 0 2px, transparent 2px 4px); }
.sep { width: 1px; height: 18px; flex: none; margin: 0 9px 0 8px; background: #8a8a8a; }

.main { display: flex; flex: 1; min-height: 0; border-top: 1px solid #8e8e8e; }
.nav { width: 281px; flex: none; display: flex; flex-direction: column; border: solid #a3a3a3; border-width: 1px 3px 0 2px; }
.nav-head { display: flex; align-items: center; justify-content: space-between; height: 22px; flex: none; padding: 0 5px 0 9px; font: 11px/16px "Noto Sans", sans-serif; }
.collapse { width: 16px; height: 16px; padding: 2px; border: 1px solid #5c94d0; background: linear-gradient(#d9ebfb, #b5d5f3); }
.nav-body { display: flex; flex: 1; min-height: 0; margin-right: 1px; padding: 4px 3px 0 6px; background: #fff; border-top: 1px solid #d8d8d8; border-right: 1px solid #c6c6c6; }
.tree { flex: 1; min-width: 0; margin: 0; padding: 0; list-style: none; overflow: hidden; font: 12px/20px "Noto Sans", sans-serif; }
.tree li { display: flex; align-items: center; height: 20px; padding-left: 6px; white-space: nowrap; }
.tw { width: 8px; height: 8px; margin-right: 6px; }
.db { width: 14px; height: 18px; margin-right: 8px; }
.ic { width: 17px; height: 17px; margin-right: 5px; }
.tree .sub { margin-left: 18px; background: #b5dff7; }
.blue { background: #b5dff7; }
.green { background: #cafad6; }
.yellow { background: #fafacd; }
.tree .selected { margin-left: 0; padding-left: 24px; background: #3399ff; color: #fff; }
.tree small { margin-left: 13px; font-size: 10px; line-height: 18px; }
.sq { width: 6px; height: 6px; margin: 3px 0 0 4px; border: 1px solid #222; }
.scroll { width: 16px; flex: none; margin-left: 1px; background: #cdcdcd; }
.scroll button { width: 100%; height: 17px; display: flex; align-items: center; justify-content: center; background: #f0f0f0; }
.scroll svg { width: 10px; height: 10px; }

.workspace { flex: 1; min-width: 0; display: flex; padding: 2px 0 0 2px; background: #a3a3a3; }
.window { flex: 1; min-width: 0; display: flex; flex-direction: column; padding-left: 7px; border: solid #444; border-width: 1px 0 0 1px; border-top-left-radius: 7px; background: linear-gradient(#bccddb, #d9e5f0 30px); }
.win-title { display: flex; align-items: center; gap: 5px; height: 28px; flex: none; margin: 0; padding: 6px 0 0 1px; font: 11px/16px "Noto Sans", sans-serif; color: #8b949c; }
.win-body { flex: 1; min-height: 0; display: flex; flex-direction: column; padding: 8px 0 0 7px; background: #f0f0f0; overflow: hidden; }

.tabs { display: flex; align-items: flex-end; flex: none; height: 25px; }
.tabs button { flex: none; height: 23px; padding: 0 10px 0 7px; border-top: 1px solid #dadada; border-right: 1px solid #dadada; white-space: nowrap; }
.tabs button:first-child { padding: 0 8px 0 7px; }
.tabs button:nth-child(3) { padding: 0 7px 0 6px; }
.tabs .active { height: 25px; padding: 0 6px 2px 7px; background: #fff; font-weight: bold; }
.tabs .last { flex: 1; text-align: left; }
.tabpage { flex: none; padding: 6px 0 9px 9px; border: 3px solid #fff; border-width: 2px 0 3px 3px; box-shadow: -1px 0 #d0d0d0; }

fieldset { width: 758px; min-width: 0; margin: 0 0 5px; padding: 3px 0 5px; border: 1px solid #dcdcdc; }
fieldset:last-child { margin-bottom: 0; }
legend { display: flex; align-items: center; gap: 1px; margin-left: 9px; padding: 0 5px 0 0; font-weight: bold; }
.up { border: 4px solid transparent; border-bottom: 7px solid #000; border-top: 0; }
label { padding-right: 4px; text-align: right; white-space: nowrap; }
input, textarea { width: 100%; height: 16px; padding: 0 0 0 1px; border: 1px solid #ababab; border-radius: 0; background: #fff; resize: none; }
.ro { background: #f0f0f0; }
.key { background: #c1dcc1; font-weight: bold; }
.num { text-align: right; padding-right: 1px; }
.grid { display: grid; grid-template-columns: 67px 116px 63px 116px 38px 100px 44px 52px 57px 94px; gap: 4px 0; align-items: center; line-height: 16px; }
.grid textarea { height: 56px; }
.grid label[for="pozn"] { align-self: start; }
.wide { grid-column: 2 / -1; }
.wide2 { grid-column: 4 / -1; }
.pair { display: flex; }
.pair label { width: 26px; }
.pair.gap { gap: 4px; }
.pair .w28 { width: 28px; flex: none; }
.dots { width: 16px; height: 16px; flex: none; line-height: 8px; border: 1px solid #ababab; background: #e4e4e4; font-weight: bold; }
label .flag { float: left; margin-left: 1px; }
.flag { width: 16px; height: 16px; }
.stamp { display: flex; gap: 1px; line-height: 16px; }
.stamp label { width: 43px; padding-right: 1px; }
.stamp input { width: 103px; }

.list { flex: 1; min-height: 0; margin-top: 5px; padding-top: 2px; background: #fff; border: solid #6a6a6a; border-width: 1px 0 0 1px; overflow: hidden; }
table { width: calc(100% + 16px); table-layout: fixed; border-collapse: collapse; }
.c1 { width: 57px; } .c2 { width: 94px; } .c3 { width: 39px; } .c4 { width: 20px; } .c5 { width: 73px; } .c6 { width: 26px; } .c7 { width: 31px; } .c8 { width: 34px; } .c9 { width: 60px; }
th, td { height: 18px; padding: 0 1px; overflow: hidden; white-space: nowrap; text-align: left; font-weight: normal; border-right: 1px solid #fff; }
th { height: 19px; padding: 0 0 0 3px; background: #c0c0c0; border-bottom: 1px solid #777; }
td { background: #3399ff; color: #fff; border-right-color: #a8d2ff; }
td.bold { font-weight: bold; }
.ctr { text-align: center; }
.fl { padding: 0; }

.dialog { position: absolute; left: 541px; top: 232px; width: 552px; height: auto; margin: 0; padding: 0; border: 1px solid #5a5a5a; background: #f0f0f0; color: #000; box-shadow: 3px 5px 16px 2px rgba(0, 0, 0, .4); }
.dlg-title { display: flex; align-items: center; gap: 6px; height: 26px; margin: 0; padding: 0 9px 2px 2px; background: #fff; font: 11px/16px "Noto Sans", sans-serif; }
.close { margin-left: auto; }
.close svg { width: 12px; height: 12px; }
.dlg-body { display: flex; flex-direction: column; gap: 4px; padding: 11px 11px 10px 0; }
.line { display: flex; align-items: center; height: 18px; padding-right: 20px; }
.line input { height: 18px; flex: none; padding-bottom: 1px; font-weight: bold; }
.line .grow { flex: 1; }
.line label.grow { padding-right: 2px; }
.first { width: 73px; flex: none; padding-right: 4px; text-align: right; }
.cap { padding-left: 4px; }
.l55 { width: 55px; } .l36 { width: 36px; } .l43 { width: 43px; }
.line .w54 { width: 54px; } .line .w57 { width: 57px; } .line .w71 { width: 71px; } .line .w75 { width: 75px; } .line .w81 { width: 81px; }
.line .ml { margin-left: 4px; }
.line .picked { color: #fff; background: linear-gradient(#3399ff, #3399ff) right / 28px 100% no-repeat #fff; }
.fixed { padding: 0 6px 0 26px; }
.line input[type="checkbox"] { appearance: none; width: 13px; height: 13px; padding: 0; border-color: #333; }
.dne { padding-left: 177px; }
.smer { padding-left: 145px; }
.actions { display: flex; justify-content: flex-end; gap: 9px; margin-top: 18px; }
.actions button { width: 61px; height: 21px; border: 1px solid #adadad; background: #e1e1e1; }
.actions .ok { border: 2px solid #0f73c4; }
```
